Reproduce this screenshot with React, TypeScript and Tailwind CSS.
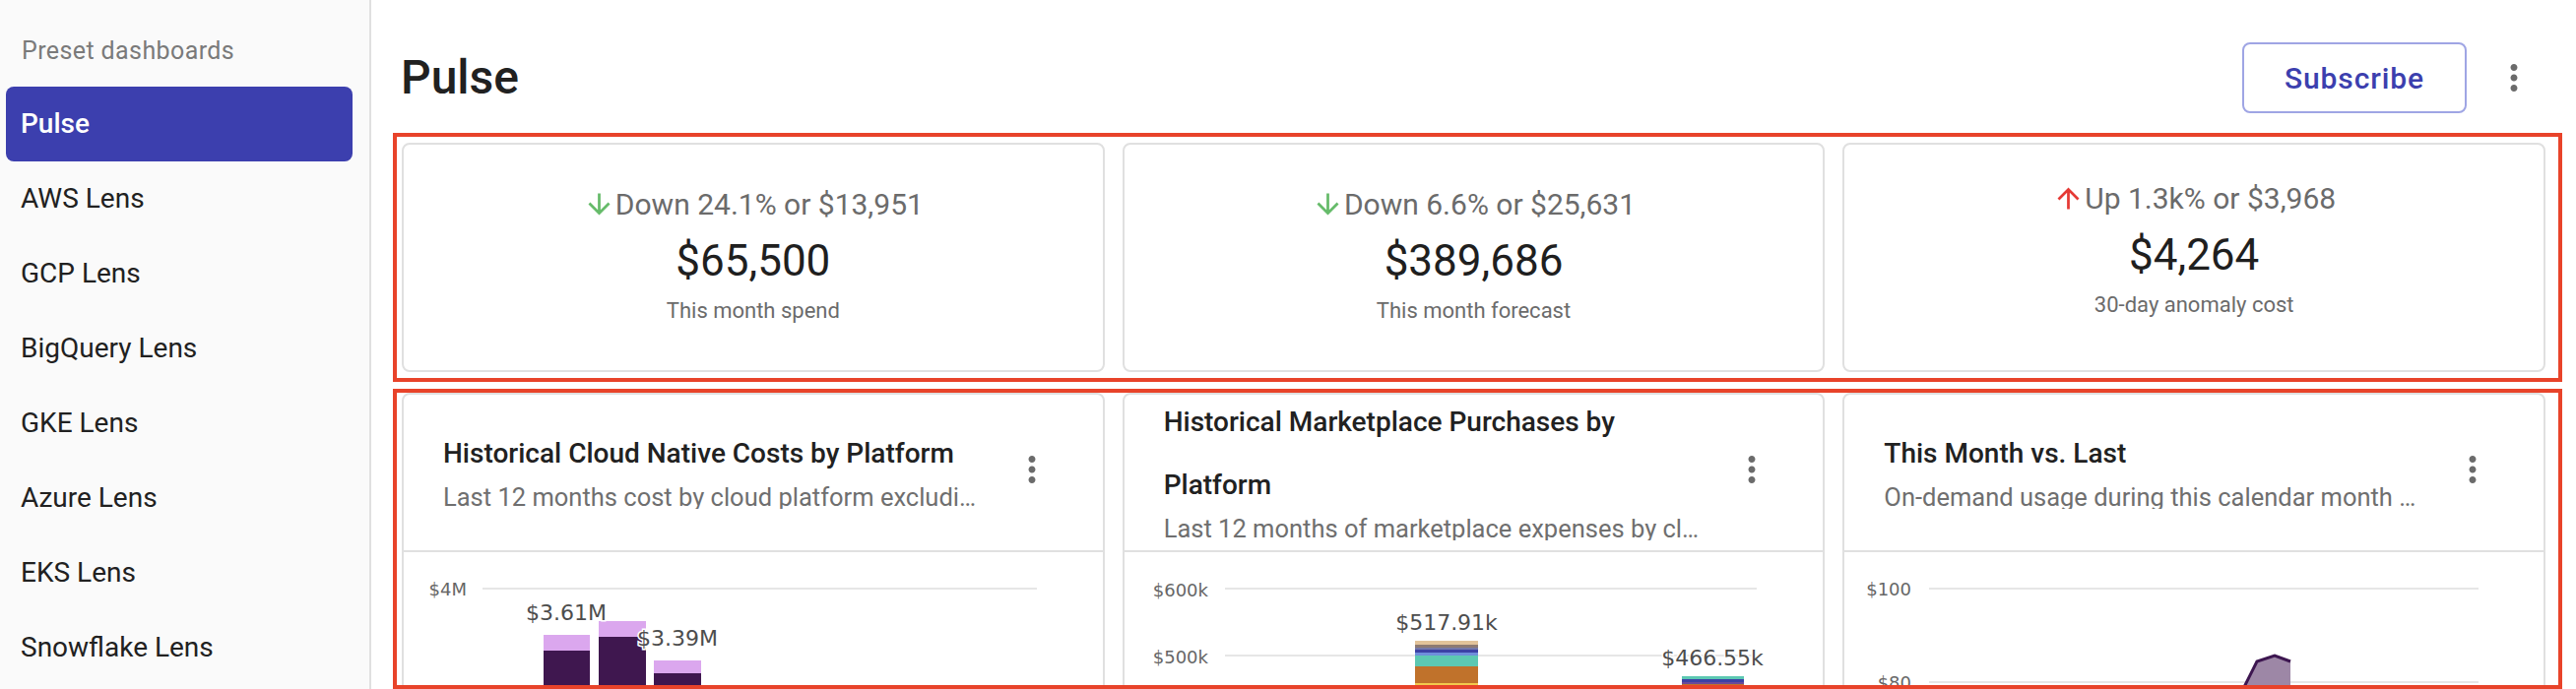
import React from 'react';

const navItems = ['Pulse', 'AWS Lens', 'GCP Lens', 'BigQuery Lens', 'GKE Lens', 'Azure Lens', 'EKS Lens', 'Snowflake Lens'];

function MoreVert({ size = 42 }: { size?: number }) {
  return (
    <svg width={size} height={size} viewBox="0 0 24 24" fill="#6b6b6b">
      <path d="M12 8c1.1 0 2-.9 2-2s-.9-2-2-2-2 .9-2 2 .9 2 2 2zm0 2c-1.1 0-2 .9-2 2s.9 2 2 2 2-.9 2-2-.9-2-2-2zm0 6c-1.1 0-2 .9-2 2s.9 2 2 2 2-.9 2-2-.9-2-2-2z" />
    </svg>
  );
}

function Arrow({ up }: { up?: boolean }) {
  return (
    <svg width={33} height={33} viewBox="0 0 24 24" fill={up ? '#e53935' : '#66bb6a'} className="shrink-0">
      {up ? (
        <path d="M4 12l1.41 1.41L11 7.83V20h2V7.83l5.58 5.59L20 12l-8-8-8 8z" />
      ) : (
        <path d="M20 12l-1.41-1.41L13 16.17V4h-2v12.17l-5.58-5.59L4 12l8 8 8-8z" />
      )}
    </svg>
  );
}

interface Stat { change: string; up?: boolean; value: string; label: string; pad: string; }

const stats: Stat[] = [
  { change: 'Down 24.1% or $13,951', value: '$65,500', label: 'This month spend', pad: 'pt-[40px]' },
  { change: 'Down 6.6% or $25,631', value: '$389,686', label: 'This month forecast', pad: 'pt-[40px]' },
  { change: 'Up 1.3k% or $3,968', up: true, value: '$4,264', label: '30-day anomaly cost', pad: 'pt-[34px]' },
];

function StatCard({ s }: { s: Stat }) {
  return (
    <div className={`flex-1 h-[233px] rounded-[8px] border-2 border-[#e0e0e0] bg-white flex flex-col items-center ${s.pad}`}>
      <div className="flex items-center h-[40px] text-[30px] text-[#6b6b6b]">
        <Arrow up={s.up} />
        <span>{s.change}</span>
      </div>
      <div className="mt-[10px] h-[56px] leading-[56px] text-[44px] text-[#1f1f1f]">{s.value}</div>
      <div className="mt-[8px] h-[30px] leading-[30px] text-[22px] text-[#6b6b6b]">{s.label}</div>
    </div>
  );
}

const axis = { fontFamily: 'DejaVu Sans', fontSize: 18, fill: '#666' };
const dataLabel = { fontFamily: 'DejaVu Sans', fontSize: 22, fill: '#4d4d4d', stroke: '#fff', strokeWidth: 3, paintOrder: 'stroke' as const };

function CloudChart() {
  return (
    <svg width="100%" height={300}>
      <text x={64} y={44} textAnchor="end" {...axis}>$4M</text>
      <line x1={80} x2={643} y1={37} y2={37} stroke="#e6e6e6" strokeWidth={2} />
      <rect x={142} y={84} width={47} height={16} fill="#dba7ee" />
      <rect x={142} y={100} width={47} height={200} fill="#3f174f" />
      <rect x={198} y={70} width={48} height={16} fill="#dba7ee" />
      <rect x={198} y={86} width={48} height={214} fill="#3f174f" />
      <rect x={254} y={110} width={48} height={13} fill="#dba7ee" />
      <rect x={254} y={123} width={48} height={177} fill="#3f174f" />
      <text x={165} y={69} textAnchor="middle" {...dataLabel}>$3.61M</text>
      <text x={278} y={95} textAnchor="middle" {...dataLabel}>$3.39M</text>
    </svg>
  );
}

function MarketChart() {
  const bar1: [number, number, string][] = [
    [90, 4, '#e2c39a'], [94, 3, '#8d7a72'], [97, 2, '#7478a8'], [99, 3, '#3c41a5'], [102, 3, '#6f8edb'],
    [105, 11, '#5cc8b2'], [116, 17, '#c0722b'], [133, 3, '#f2c94c'], [136, 100, '#e8b33a'],
  ];
  const bar2: [number, number, string][] = [
    [126, 3, '#5cc8b2'], [129, 3, '#3c41a5'], [132, 2, '#6a4a9a'], [134, 2, '#c0722b'], [136, 100, '#f2c94c'],
  ];
  return (
    <svg width="100%" height={300}>
      <text x={85} y={45} textAnchor="end" {...axis}>$600k</text>
      <line x1={102} x2={642} y1={37} y2={37} stroke="#e6e6e6" strokeWidth={2} />
      <text x={85} y={113} textAnchor="end" {...axis}>$500k</text>
      <line x1={102} x2={642} y1={105} y2={105} stroke="#e6e6e6" strokeWidth={2} />
      {bar1.map(([y, h, c], i) => <rect key={i} x={295} y={y} width={64} height={h} fill={c} />)}
      {bar2.map(([y, h, c], i) => <rect key={i} x={566} y={y} width={63} height={h} fill={c} />)}
      <text x={327} y={79} textAnchor="middle" {...dataLabel}>$517.91k</text>
      <text x={597} y={115} textAnchor="middle" {...dataLabel}>$466.55k</text>
    </svg>
  );
}

function MonthChart() {
  return (
    <svg width="100%" height={300}>
      <text x={68} y={44} textAnchor="end" {...axis}>$100</text>
      <line x1={86} x2={644} y1={37} y2={37} stroke="#e6e6e6" strokeWidth={2} />
      <text x={68} y={139} textAnchor="end" {...axis}>$80</text>
      <line x1={86} x2={644} y1={132} y2={132} stroke="#e6e6e6" strokeWidth={2} />
      <path d="M395 160 L405 139 L419 111 L437 105 L453 111 L453 160 Z" fill="#9d87a6" />
      <path d="M395 160 L405 139 L419 111 L437 105 L453 111" fill="none" stroke="#3d1650" strokeWidth={3} />
    </svg>
  );
}

interface ChartCardProps { title: string; subtitle: string; children: React.ReactNode; }

function ChartCard({ title, subtitle, children }: ChartCardProps) {
  return (
    <div className="flex-1 min-w-0 h-[420px] rounded-t-[8px] border-2 border-[#e0e0e0] bg-white flex flex-col">
      <div className="h-[160px] shrink-0 border-b-2 border-[#e0e0e0] flex items-center pl-[40px] pr-[48px] pb-[14px]">
        <div className="flex-1 min-w-0">
          <div className="text-[28px] leading-[64px] font-medium text-[#212121]">{title}</div>
          <div className="text-[25.5px] leading-[24px] text-[#6f6f6f] truncate">{subtitle}</div>
        </div>
        <div className="ml-[24px] w-[48px] h-[48px] flex items-center justify-center mt-[8px]">
          <MoreVert />
        </div>
      </div>
      <div className="flex-1">{children}</div>
    </div>
  );
}

export default function App() {
  return (
    <div className="flex h-[700px] w-[2616px] overflow-hidden bg-white font-['Roboto',sans-serif]">
      {/* Sidebar */}
      <aside className="w-[377px] shrink-0 h-full bg-[#fafafa] border-r-2 border-[#e0e0e0] pt-[32px] pl-[6px] pr-[17px]">
        <div className="h-[40px] flex items-center pl-[16px] text-[25px] tracking-[0.4px] text-[#7a7a7a]">Preset dashboards</div>
        <nav className="mt-[16px] flex flex-col">
          {navItems.map((item, i) => (
            <div
              key={item}
              className={
                i === 0
                  ? 'h-[76px] flex items-center pl-[15px] rounded-[8px] bg-[#3c3fae] text-white text-[28px] font-medium'
                  : 'h-[76px] flex items-center pl-[15px] text-[28px] text-[#212121]'
              }
            >
              {item}
            </div>
          ))}
        </nav>
      </aside>

      {/* Main */}
      <main className="flex-1 min-w-0 pl-[22px] pr-[14px] pt-[43px]">
        <div className="h-[72px] flex items-center pl-[8px] pr-[25px]">
          <h1 className="flex-1 text-[48px] font-medium text-[#212121] leading-none">Pulse</h1>
          <button className="w-[228px] h-[72px] rounded-[8px] border-2 border-[#9fa5e4] text-[#3c3fae] text-[30px] font-medium tracking-[0.9px]">
            Subscribe
          </button>
          <div className="ml-[24px] w-[48px] h-[48px] flex items-center justify-center">
            <MoreVert />
          </div>
        </div>

        <div className="mt-[20px] border-4 border-[#e8432a] pt-[6px] pb-[6px] pl-[5px] pr-[13px] flex gap-[18px]">
          {stats.map((s) => <StatCard key={s.label} s={s} />)}
        </div>

        <div className="mt-[7px] h-[305px] overflow-hidden border-4 border-[#e8432a] pl-[5px] pr-[13px] flex gap-[18px]">
          <ChartCard title="Historical Cloud Native Costs by Platform" subtitle="Last 12 months cost by cloud platform excluding marketplace purchases">
            <CloudChart />
          </ChartCard>
          <ChartCard title="Historical Marketplace Purchases by Platform" subtitle="Last 12 months of marketplace expenses by cloud platform">
            <MarketChart />
          </ChartCard>
          <ChartCard title="This Month vs. Last" subtitle="On-demand usage during this calendar month compared to last month">
            <MonthChart />
          </ChartCard>
        </div>
      </main>
    </div>
  );
}
